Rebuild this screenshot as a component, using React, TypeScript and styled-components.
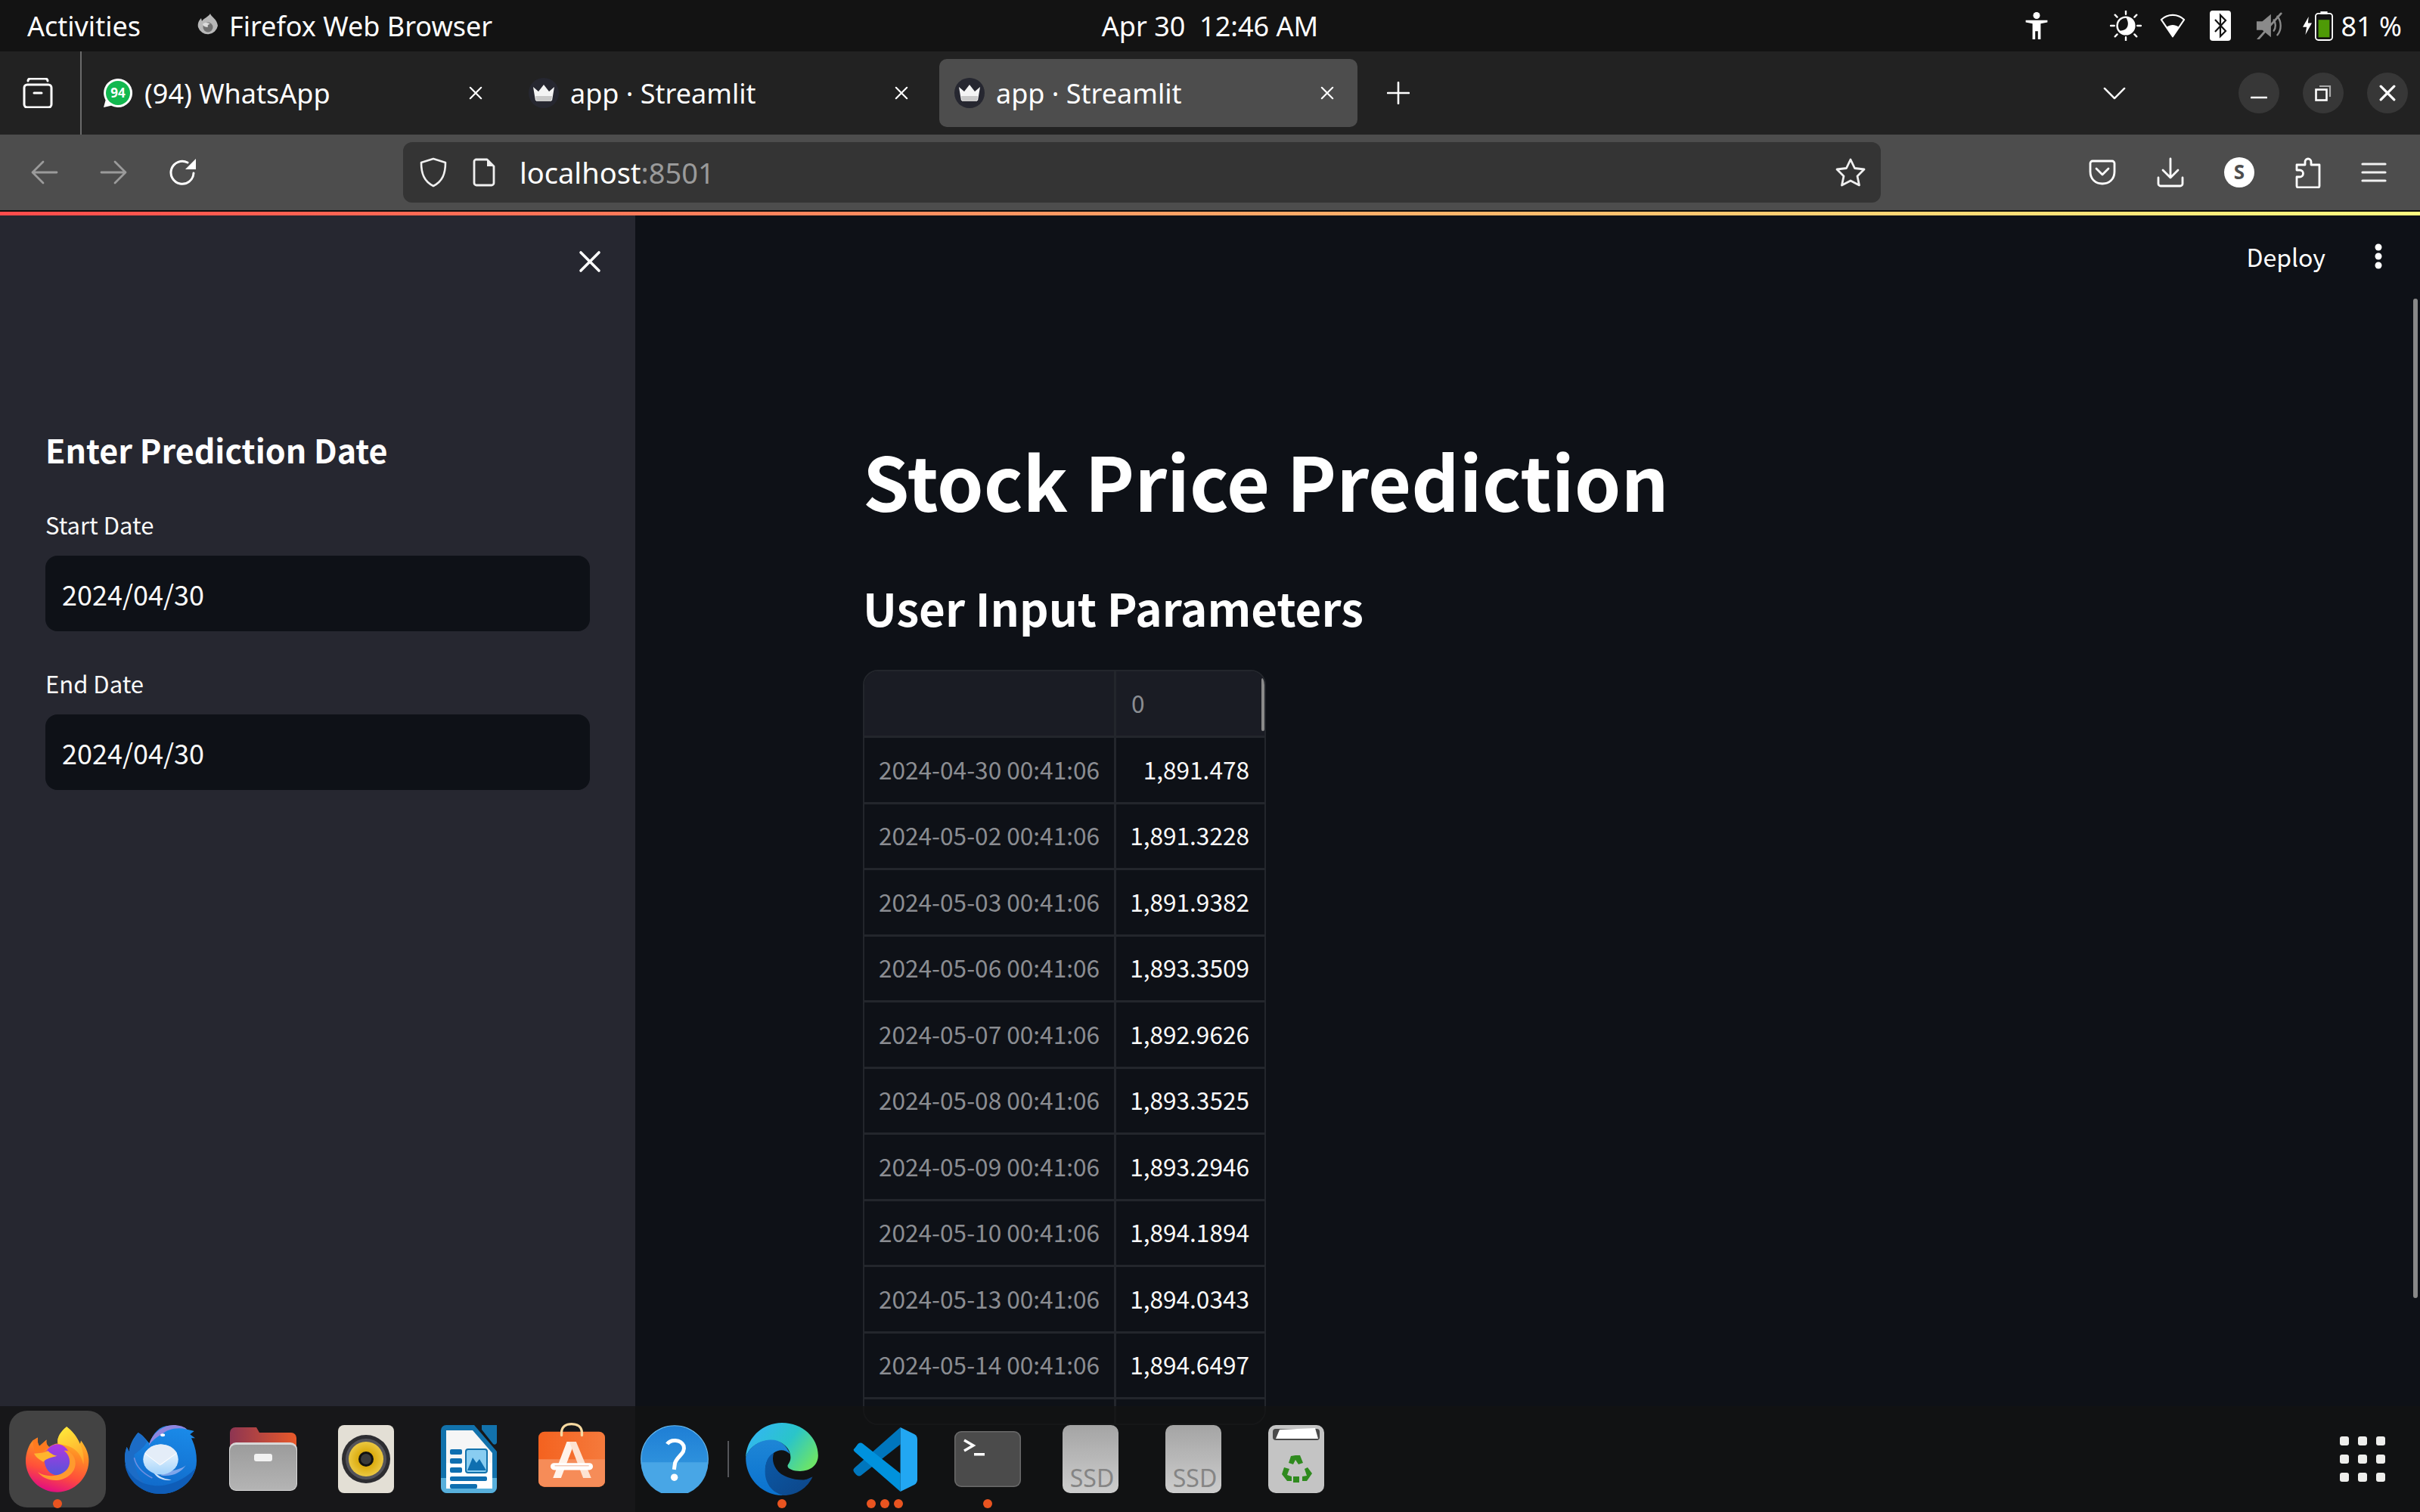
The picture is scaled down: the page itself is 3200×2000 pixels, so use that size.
import React from 'react';
import styled, { createGlobalStyle } from 'styled-components';

const GlobalStyle = createGlobalStyle`
  html, body {
    margin: 0;
    padding: 0;
    background: #0e1117;
  }
  * {
    box-sizing: border-box;
  }
`;

const systemFont = `'Noto Sans', 'Open Sans', sans-serif`;
const appFont = `'Noto Sans CJK JP', 'Noto Sans', sans-serif`;

const Screen = styled.div`
  position: relative;
  width: 3200px;
  height: 2000px;
  overflow: hidden;
  display: flex;
  flex-direction: column;
  background: #0e1117;
  color: #fff;
  font-family: ${systemFont};
`;

/* gnome top bar */
const TopBar = styled.div`
  height: 68px;
  flex: none;
  display: grid;
  grid-template-columns: 1fr auto 1fr;
  align-items: center;
  background: #131313;
  font-size: 36px;
  padding: 0 24px 0 36px;
`;

const TopLeft = styled.div`
  display: flex;
  align-items: center;
`;

const TopTitle = styled.span`
  margin-left: 13px;
`;

const Clock = styled.span`
  margin-right: 12px;
`;

const TopRight = styled.div`
  display: flex;
  align-items: center;
  justify-content: flex-end;
`;

const Tray = styled.span<{ $w: number; $gap?: number }>`
  display: flex;
  justify-content: center;
  width: ${(p) => p.$w}px;
  margin-left: ${(p) => p.$gap ?? 0}px;
`;

const Percent = styled.span`
  margin-left: 11px;
`;

/* browser tabs */
const TabBar = styled.div`
  height: 110px;
  flex: none;
  display: flex;
  align-items: center;
  background: #222222;
  font-size: 36px;
`;

const ViewButton = styled.div`
  width: 108px;
  height: 110px;
  flex: none;
  margin-right: 8px;
  display: flex;
  align-items: center;
  justify-content: center;
  padding-right: 6px;
  border-right: 2px solid #6a6a6a;
`;

const Tab = styled.div<{ $active?: boolean }>`
  width: 553px;
  height: 90px;
  flex: none;
  margin-right: 10px;
  padding: 0 31px 0 20px;
  display: flex;
  align-items: center;
  gap: 15px;
  border-radius: 10px;
  background: ${(p) => (p.$active ? '#4d4d4d' : 'transparent')};
`;

const TabLabel = styled.span`
  flex: 1;
  white-space: nowrap;
`;

const NewTab = styled.div`
  width: 44px;
  margin-left: 22px;
  display: flex;
  justify-content: center;
`;

const TabChevron = styled.div`
  margin-left: 907px;
  width: 36px;
  display: flex;
  justify-content: center;
`;

const WindowButtons = styled.div`
  margin-left: 146px;
  display: flex;
  gap: 31px;
`;

const WindowButton = styled.div`
  width: 54px;
  height: 54px;
  border-radius: 50%;
  background: #373737;
  display: flex;
  align-items: center;
  justify-content: center;
`;

/* nav toolbar */
const NavBar = styled.div`
  height: 100px;
  flex: none;
  display: flex;
  align-items: center;
  background: #4d4d4d;
`;

const NavLeft = styled.div`
  width: 533px;
  flex: none;
  display: flex;
  align-items: center;
  padding-left: 41px;
  gap: 55px;
`;

const UrlBar = styled.div`
  width: 1954px;
  height: 80px;
  flex: none;
  display: flex;
  align-items: center;
  padding: 0 20px 0 22px;
  border-radius: 12px;
  background: #343434;
  font-size: 38px;
`;

const PageIcon = styled.svg`
  margin-left: 34px;
`;

const UrlText = styled.span`
  margin-left: 32px;
  flex: 1;
`;

const UrlPort = styled.span`
  color: #9a9a9a;
`;

const NavRight = styled.div`
  flex: 1;
  display: flex;
  align-items: center;
  padding-left: 275px;
  gap: 53.5px;
`;

const ChromeEdge = styled.div`
  height: 2px;
  flex: none;
  background: #0c0c0c;
`;

const Decoration = styled.div`
  height: 5px;
  flex: none;
  background: linear-gradient(90deg, #ff4b4b, #fffd80);
`;

/* streamlit page */
const Page = styled.div`
  flex: 1;
  min-height: 0;
  display: flex;
  font-family: ${appFont};
`;

const Sidebar = styled.aside`
  width: 840px;
  flex: none;
  background: #262730;
  padding: 46px 60px 0;
`;

const CloseRow = styled.div`
  display: flex;
  justify-content: flex-end;
  height: 30px;
  margin-right: -15px;
`;

const SideHeading = styled.h3`
  margin: 201px 0 0;
  font-size: 43px;
  line-height: 64px;
  font-weight: 600;
`;

const FieldLabel = styled.div<{ $top: number }>`
  margin-top: ${(p) => p.$top}px;
  font-size: 31px;
  line-height: 44px;
  color: #fafafa;
`;

const DateInput = styled.div`
  margin-top: 19px;
  height: 100px;
  width: 720px;
  display: flex;
  align-items: center;
  padding-left: 22px;
  border-radius: 16px;
  background: #0e1117;
  font-size: 36px;
  color: #fafafa;
`;

const Main = styled.main`
  position: relative;
  flex: 1;
  min-width: 0;
  padding-left: 301px;
  overflow: hidden;
`;

const Header = styled.div`
  position: absolute;
  top: 34px;
  right: 49px;
  display: flex;
  align-items: center;
  gap: 64px;
  font-size: 32px;
  line-height: 40px;
`;

const PageScrollbar = styled.div`
  position: absolute;
  top: 110px;
  right: 3px;
  width: 6px;
  height: 1322px;
  border-radius: 3px;
  background: #888888;
`;

const Title = styled.h1`
  margin: 289px 0 0;
  font-size: 98.5px;
  line-height: 120px;
  font-weight: 700;
`;

const Subtitle = styled.h2`
  margin: 69px 0 0;
  font-size: 60px;
  line-height: 80px;
  font-weight: 600;
`;

const Frame = styled.div`
  position: relative;
  margin-top: 43px;
  width: 533px;
  height: 999px;
  overflow: hidden;
  border: 2px solid #23262c;
  border-radius: 20px;
  display: grid;
  grid-template-columns: 333px 196px;
  grid-template-rows: 88px;
  grid-auto-rows: 87.5px;
  font-size: 31.6px;
`;

const Cell = styled.div<{ $kind: 'corner' | 'head' | 'index' | 'value' }>`
  display: flex;
  align-items: center;
  white-space: nowrap;
  justify-content: ${(p) => (p.$kind === 'value' ? 'flex-end' : p.$kind === 'index' ? 'center' : 'flex-start')};
  padding: 0 ${(p) => (p.$kind === 'index' ? 0 : 20)}px 3px;
  border-bottom: 3px solid #23262c;
  border-right: ${(p) => (p.$kind === 'corner' || p.$kind === 'index' ? '3px solid #23262c' : '0')};
  background: ${(p) => (p.$kind === 'corner' || p.$kind === 'head' ? '#1a1c24' : '#0e1117')};
  color: ${(p) => (p.$kind === 'value' ? '#fafafa' : '#8b8d92')};
`;

const ColumnGrip = styled.div`
  position: absolute;
  top: 9px;
  right: 0;
  width: 4px;
  height: 70px;
  border-radius: 2px;
  background: #8a8a8a;
`;

/* dock */
const Dock = styled.nav`
  position: absolute;
  left: 0;
  right: 0;
  bottom: 0;
  height: 140px;
  display: flex;
  padding-left: 8px;
  background: rgba(18, 18, 18, 0.76);
`;

const DockSlot = styled.div<{ $active?: boolean }>`
  position: relative;
  width: 128px;
  height: 128px;
  margin: 6px 4px;
  flex: none;
  border-radius: 24px;
  display: flex;
  align-items: center;
  justify-content: center;
  background: ${(p) => (p.$active ? '#434343' : 'transparent')};
`;

const RunDots = styled.div`
  position: absolute;
  left: 0;
  right: 0;
  bottom: -1px;
  display: flex;
  justify-content: center;
  gap: 6px;
`;

const RunDot = styled.span`
  width: 12px;
  height: 12px;
  border-radius: 50%;
  background: #e95420;
`;

const DockDivider = styled.div`
  width: 2px;
  height: 48px;
  margin: 46px 2px 0 2px;
  flex: none;
  background: #55565a;
`;

const AppGrid = styled.div`
  position: absolute;
  right: 46px;
  top: 40px;
  display: grid;
  grid-template-columns: repeat(3, 12px);
  grid-auto-rows: 12px;
  gap: 12px;
`;

const AppGridDot = styled.span`
  border-radius: 3px;
  background: #eeeeec;
`;

const stroke = (color = '#fff', width = 3) => ({
  fill: 'none',
  stroke: color,
  strokeWidth: width,
  strokeLinecap: 'round' as const,
  strokeLinejoin: 'round' as const,
});

const Close = ({ size = 18, width = 2.4 }: { size?: number; width?: number }) => (
  <svg width={size} height={size} viewBox="0 0 20 20">
    <path d="M2 2 18 18M18 2 2 18" {...stroke('#fff', width)} />
  </svg>
);

const Crown = () => (
  <svg width="40" height="40" viewBox="0 0 40 40">
    <circle cx="20" cy="20" r="20" fill="#262730" />
    <path d="M6 12 13 18 20 9 27 18 34 12 31 30H9z" fill="#f4f4f4" />
    <path d="M9 24H31L30 31H10z" fill="#c9c9c9" />
  </svg>
);

const WhatsAppIcon = () => (
  <svg width="40" height="40" viewBox="0 0 40 40">
    <path d="M20 1a19 19 0 1 1-9 35.7L1 39l2.6-9.6A19 19 0 0 1 20 1z" fill="#fff" />
    <circle cx="20" cy="20" r="16" fill="#12b84f" />
    <text x="20" y="26" textAnchor="middle" fontSize="17" fontWeight="700" fontFamily="'Noto Sans', sans-serif" fill="#fff">94</text>
  </svg>
);

const FirefoxSmall = () => (
  <svg width="30" height="32" viewBox="0 0 30 32">
    <path d="M18 0c1 4 9 7 10 16A13.5 14 0 0 1 2 18C1 13 3 9 6 6l1 4c2-4 8-5 11-10z" fill="#b8b8b8" />
    <circle cx="15" cy="18" r="6.5" fill="#707070" />
    <path d="M8 14c3-3 8-2 10 0-3 0-4 2-3 4-3 0-6-1-7-4z" fill="#dcdcdc" />
  </svg>
);

const Firefox = () => (
  <svg width="84" height="87" viewBox="42 45 253 260">
    <defs>
      <linearGradient id="ffBody" x1="0.75" y1="0" x2="0.45" y2="1">
        <stop offset="0" stopColor="#ffd92e" />
        <stop offset="0.4" stopColor="#ff8a25" />
        <stop offset="0.72" stopColor="#ff4f3a" />
        <stop offset="1" stopColor="#e3107f" />
      </linearGradient>
      <linearGradient id="ffFlame" x1="0.3" y1="0" x2="0.7" y2="1">
        <stop offset="0" stopColor="#ffe83a" />
        <stop offset="1" stopColor="#ffa52c" />
      </linearGradient>
      <linearGradient id="ffGlobe" x1="0.5" y1="0" x2="0.5" y2="1">
        <stop offset="0" stopColor="#b136e3" />
        <stop offset="1" stopColor="#5555d8" />
      </linearGradient>
    </defs>
    <path
      d="M205 45C225 60 245 80 258 115L262 100C285 130 295 160 293 185 290 250 235 305 168 305 100 305 42 250 42 180 42 150 55 115 70 100L90 88C88 105 92 115 96 122L125 97C122 110 128 120 135 125 150 115 165 110 170 112 165 90 180 65 205 45Z"
      fill="url(#ffBody)"
    />
    <path d="M205 45C250 80 280 140 272 195 265 160 245 135 220 125 200 118 180 115 170 112 165 90 180 65 205 45Z" fill="url(#ffFlame)" />
    <ellipse cx="168" cy="176" rx="52" ry="62" fill="url(#ffGlobe)" />
    <path d="M195 140C215 135 240 160 240 190 240 230 200 258 160 258 130 258 105 245 90 225 115 245 185 250 210 210 225 185 215 155 195 140Z" fill="#ff9a2e" />
    <path d="M75 152C95 148 118 150 130 140 140 150 155 160 167 160 150 168 125 168 112 185 100 178 85 170 75 152Z" fill="#ffb52e" />
    <path d="M70 100L90 88C88 105 92 115 96 122L125 97C122 110 128 120 135 125 120 135 110 145 80 148 75 130 70 115 70 100Z" fill="#ff7a1f" />
  </svg>
);

const Thunderbird = () => (
  <svg width="95" height="91" viewBox="432 48 286 274">
    <defs>
      <linearGradient id="tbBody" x1="0.6" y1="0" x2="0.4" y2="1">
        <stop offset="0" stopColor="#1a8ae8" />
        <stop offset="1" stopColor="#1068c8" />
      </linearGradient>
      <linearGradient id="tbMail" x1="0.5" y1="0" x2="0.5" y2="1">
        <stop offset="0" stopColor="#ffffff" />
        <stop offset="1" stopColor="#a4d3fa" />
      </linearGradient>
    </defs>
    <path
      d="M530 120C545 80 570 50 610 50 640 50 665 55 680 65L708 72 692 85 712 100 697 100C712 130 718 160 718 190 718 265 650 322 575 322 495 322 432 260 432 175 432 160 436 145 440 135L450 155C450 130 465 100 485 78 510 95 520 110 530 120Z"
      fill="url(#tbBody)"
    />
    <path d="M485 78C470 100 450 130 450 155L440 135C432 160 432 175 432 180 435 240 480 290 530 300 495 270 465 230 470 165 490 150 515 130 520 115 510 95 500 85 485 78Z" fill="#1c6cc6" />
    <path d="M432 200C460 280 540 300 600 285 650 275 700 240 715 215 700 280 640 322 575 322 500 322 440 270 432 200Z" fill="#0f5db8" />
    <path d="M528 130C535 90 575 50 625 48 650 48 670 55 680 65 640 55 600 65 580 85 560 95 540 110 528 130Z" fill="#8f86df" />
    <ellipse cx="583" cy="88" rx="9" ry="6" fill="#fff" />
    <path d="M470 180C478 215 505 240 540 258" {...stroke('#6f8fe0', 5)} />
    <path d="M575 248C620 255 655 238 675 208 660 222 620 232 590 232z" fill="#7ea5ea" />
    <path d="M555 240C575 258 595 264 618 266 590 272 560 262 545 235z" fill="#cfe3fa" />
    <ellipse cx="575" cy="185" rx="70" ry="60" fill="url(#tbMail)" />
    <path d="M512 160C530 135 555 125 575 125 600 125 625 135 640 160L580 205Q575 208 570 205Z" fill="#e4edf8" />
    <path d="M512 160 572 207 638 160" fill="none" stroke="#ffffff" strokeWidth="3" />
  </svg>
);

const Files = () => (
  <svg width="90" height="84" viewBox="0 0 90 84">
    <defs>
      <linearGradient id="fileTab" x1="0" y1="0" x2="1" y2="0">
        <stop offset="0" stopColor="#8d3552" />
        <stop offset="1" stopColor="#e8592a" />
      </linearGradient>
      <linearGradient id="fileBody" x1="0" y1="0" x2="0" y2="1">
        <stop offset="0" stopColor="#9c9c9c" />
        <stop offset="1" stopColor="#b4b4b4" />
      </linearGradient>
    </defs>
    <path d="M8 0H36l4 7h42a7 7 0 0 1 7 7v18H1V7a7 7 0 0 1 7-7z" fill="url(#fileTab)" />
    <rect x="0" y="20" width="90" height="64" rx="9" fill="#d8d8d8" />
    <rect x="1" y="23" width="88" height="60" rx="8" fill="url(#fileBody)" />
    <rect x="33" y="35" width="24" height="10" rx="3" fill="#f2f2f2" />
  </svg>
);

const Rhythmbox = () => (
  <svg width="74" height="90" viewBox="0 0 74 90">
    <defs>
      <radialGradient id="rbCone" cx="0.5" cy="0.5" r="0.6">
        <stop offset="0.3" stopColor="#d9a808" />
        <stop offset="1" stopColor="#f1d253" />
      </radialGradient>
    </defs>
    <rect width="74" height="90" rx="8" fill="#e3dfd5" />
    <circle cx="37" cy="45" r="32" fill="#2d2d31" />
    <circle cx="37" cy="45" r="27" fill="#54545a" />
    <circle cx="37" cy="45" r="23" fill="url(#rbCone)" />
    <circle cx="37" cy="45" r="10" fill="#111" />
    <circle cx="37" cy="45" r="7" fill="#3a3a3a" />
  </svg>
);

const Writer = () => (
  <svg width="74" height="90" viewBox="0 0 74 90">
    <path d="M7 0H44L74 35V82a8 8 0 0 1-8 8H8a8 8 0 0 1-8-8V7a7 7 0 0 1 7-7z" fill="#1272ac" />
    <path d="M0 70H74V82a8 8 0 0 1-8 8H8a8 8 0 0 1-8-8z" fill="#58b0dc" />
    <path d="M7 7H42L68 37V84H7z" fill="#f6f6f6" />
    <path d="M7 50H68V84H7z" fill="#fff" />
    <path d="M54 0H74V23a3 3 0 0 1-5 2L54 6z" fill="#1272ac" />
    <rect x="12" y="32" width="16" height="7" rx="2" fill="#0f6fb0" />
    <rect x="12" y="44" width="16" height="7" rx="2" fill="#0f6fb0" />
    <rect x="12" y="56" width="16" height="7" rx="2" fill="#0f6fb0" />
    <rect x="33" y="32" width="28" height="31" rx="3" fill="#89cdf1" stroke="#1272ac" strokeWidth="2" />
    <path d="M35 60 42 43 47 50 51 45 60 60z" fill="#0f6fb0" />
    <rect x="12" y="68" width="49" height="6" rx="2" fill="#0f6fb0" />
    <rect x="12" y="78" width="36" height="6" rx="2" fill="#0f6fb0" />
  </svg>
);

const Store = () => (
  <svg width="88" height="97" viewBox="35 20 265 292">
    <defs>
      <linearGradient id="storeTop" x1="0" y1="0" x2="1" y2="0">
        <stop offset="0" stopColor="#f4621f" />
        <stop offset="1" stopColor="#f57a3c" />
      </linearGradient>
    </defs>
    <rect x="35" y="55" width="265" height="220" rx="24" fill="url(#storeTop)" />
    <path d="M35 165H300V251a24 24 0 0 1-24 24H59a24 24 0 0 1-24-24z" fill="#f68c58" />
    <path d="M127 70V60C127 35 145 25 167 25S208 35 208 60V70" {...stroke('#f7d9a0', 10)} />
    <path d="M148 95H180L125 240H93z" fill="#fff3ea" />
    <path d="M158 95H185L245 240H213z" fill="#fde3d2" />
    <rect x="83" y="180" width="169" height="28" rx="14" fill="#fff" />
    <rect x="100" y="189" width="136" height="4" fill="#f2c4ae" />
  </svg>
);

const Help = () => (
  <svg width="90" height="90" viewBox="442 30 268 268">
    <defs>
      <linearGradient id="helpTop" x1="0" y1="0" x2="0" y2="1">
        <stop offset="0" stopColor="#1e7ed5" />
        <stop offset="1" stopColor="#3aa0e2" />
      </linearGradient>
    </defs>
    <circle cx="576" cy="164" r="132" fill="url(#helpTop)" stroke="#68b9ee" strokeWidth="3" />
    <path d="M444 177H708A132 132 0 0 1 444 177z" fill="#48a6e6" />
    <path d="M547 105C560 85 600 85 612 112 620 140 590 150 578 178L574 205" {...stroke('#fff', 15)} strokeLinecap="butt" />
    <circle cx="575" cy="236" r="14" fill="#fff" />
  </svg>
);

const Edge = () => (
  <svg width="96" height="96" viewBox="33 20 289 290">
    <defs>
      <linearGradient id="edgeTop" x1="0" y1="0.2" x2="1" y2="0.7">
        <stop offset="0" stopColor="#33b5f5" />
        <stop offset="0.55" stopColor="#2ac5c9" />
        <stop offset="1" stopColor="#6ce468" />
      </linearGradient>
      <linearGradient id="edgeLeft" x1="0.5" y1="0" x2="0.5" y2="1">
        <stop offset="0" stopColor="#1e86d6" />
        <stop offset="1" stopColor="#0a72cf" />
      </linearGradient>
      <linearGradient id="edgeDark" x1="0" y1="0" x2="1" y2="1">
        <stop offset="0" stopColor="#0b5aa8" />
        <stop offset="1" stopColor="#0d4587" />
      </linearGradient>
    </defs>
    <path d="M33 160C35 80 100 20 178 20 260 20 322 80 322 150 322 190 290 213 250 213 225 213 200 205 200 192 200 185 212 178 212 158 212 115 170 90 135 90 90 90 45 115 33 160Z" fill="url(#edgeTop)" />
    <path d="M33 160C45 115 90 88 135 88 170 88 195 110 210 145 190 125 165 125 145 140 115 160 105 200 115 240 125 280 155 300 185 310 100 312 33 245 33 160Z" fill="url(#edgeLeft)" />
    <path d="M185 310C140 300 110 265 110 215 110 175 125 150 145 140 138 160 140 185 155 205 175 235 220 248 260 248 275 248 290 240 300 235 280 280 235 310 185 310Z" fill="url(#edgeDark)" />
  </svg>
);

const VSCode = () => (
  <svg width="85" height="85" viewBox="458 38 254 254">
    <path d="M645 38V105L490 228Q480 235 470 225L462 215Q455 205 465 197Z" fill="#0076bd" />
    <path d="M465 120 478 103Q488 95 497 103L645 220V292L465 135Q455 127 465 120Z" fill="#0092dd" />
    <path d="M645 38 700 65Q712 72 712 85V245Q712 258 700 265L645 292Z" fill="#22a7f2" />
  </svg>
);

const Terminal = () => (
  <svg width="88" height="74" viewBox="0 0 88 74">
    <rect width="88" height="74" rx="9" fill="#6a6a6a" />
    <rect x="1.5" y="1.5" width="85" height="71" rx="8" fill="#4b4b4b" />
    <path d="M13 12 25 19 13 26" fill="none" stroke="#fff" strokeWidth="3.5" />
    <rect x="26" y="29" width="14" height="3.5" fill="#fff" />
  </svg>
);

const Drive = () => (
  <svg width="74" height="90" viewBox="0 0 74 90">
    <defs>
      <linearGradient id="driveBody" x1="0" y1="0" x2="0" y2="1">
        <stop offset="0" stopColor="#a4a4a4" />
        <stop offset="1" stopColor="#cdcdcd" />
      </linearGradient>
    </defs>
    <rect width="74" height="90" rx="10" fill="url(#driveBody)" />
    <text x="39" y="82" textAnchor="middle" fontSize="32" fontFamily="'Noto Sans', sans-serif" fill="#858585">SSD</text>
  </svg>
);

const Trash = () => (
  <svg width="74" height="90" viewBox="0 0 74 90">
    <rect width="74" height="90" rx="10" fill="#c4c4c4" />
    <rect x="6" y="5" width="62" height="15" rx="4" fill="#4a4a4a" />
    <path d="M10 18 15 6 62 4 66 18z" fill="#fff" />
    <path d="M30 41 36 40 42 40 46 50 40 52 36 46 33 52 27 50zM21 56l7 2-3 8 6 2v6h-6l-7-9zM52 56l6 8-7 10h-6v-6l6-1-3-9zM33 68h8v8h-8z" fill="#2f8a1e" />
  </svg>
);

const rows = [
  ['2024-04-30 00:41:06', '1,891.478'],
  ['2024-05-02 00:41:06', '1,891.3228'],
  ['2024-05-03 00:41:06', '1,891.9382'],
  ['2024-05-06 00:41:06', '1,893.3509'],
  ['2024-05-07 00:41:06', '1,892.9626'],
  ['2024-05-08 00:41:06', '1,893.3525'],
  ['2024-05-09 00:41:06', '1,893.2946'],
  ['2024-05-10 00:41:06', '1,894.1894'],
  ['2024-05-13 00:41:06', '1,894.0343'],
  ['2024-05-14 00:41:06', '1,894.6497'],
  ['', ''],
];

const dockApps = [
  { key: 'firefox', icon: <Firefox />, dots: 1, active: true },
  { key: 'thunderbird', icon: <Thunderbird />, dots: 0 },
  { key: 'files', icon: <Files />, dots: 0 },
  { key: 'rhythmbox', icon: <Rhythmbox />, dots: 0 },
  { key: 'writer', icon: <Writer />, dots: 0 },
  { key: 'store', icon: <Store />, dots: 0 },
  { key: 'help', icon: <Help />, dots: 0 },
  { key: 'divider', icon: null, dots: 0 },
  { key: 'edge', icon: <Edge />, dots: 1 },
  { key: 'vscode', icon: <VSCode />, dots: 3 },
  { key: 'terminal', icon: <Terminal />, dots: 1 },
  { key: 'ssd1', icon: <Drive />, dots: 0 },
  { key: 'ssd2', icon: <Drive />, dots: 0 },
  { key: 'trash', icon: <Trash />, dots: 0 },
];

const App = () => {
  return (
    <Screen>
      <GlobalStyle />
      <TopBar>
        <TopLeft>
          <span>Activities</span>
          <Tray $w={30} $gap={74}>
            <FirefoxSmall />
          </Tray>
          <TopTitle>Firefox Web Browser</TopTitle>
        </TopLeft>
        <Clock>Apr 30&nbsp;&nbsp;12:46 AM</Clock>
        <TopRight>
          <Tray $w={30}>
            <svg width="30" height="36" viewBox="0 0 32 40">
              <circle cx="16" cy="5" r="5" fill="#fff" />
              <path d="M0 12H32V15L22 17V40H18V28H14V40H10V17L0 15z" fill="#fff" />
            </svg>
          </Tray>
          <Tray $w={42} $gap={82}>
            <svg width="42" height="40" viewBox="0 0 42 42">
              <path d="M21 0V5M21 37V42M0 21H5M37 21H42M6 6 9 9M33 33 36 36M36 6 33 9M9 33 6 36" {...stroke('#fff', 2.5)} />
              <circle cx="21" cy="21" r="12" fill="none" stroke="#fff" strokeWidth="2.5" />
              <path d="M21 9a12 12 0 0 1 0 24c-7 0-9-5-9-5 8 0 12-4 12-10 0-4-3-9-3-9z" fill="#fff" />
            </svg>
          </Tray>
          <Tray $w={38} $gap={22}>
            <svg width="38" height="32" viewBox="0 0 38 36">
              <path d="M19 34 2 9C7 4 13 2 19 2s12 2 17 7z" fill="none" stroke="#fff" strokeWidth="2.5" strokeLinejoin="round" />
              <path d="M19 34 10 20c3-2 6-3 9-3s6 1 9 3z" fill="#fff" />
            </svg>
          </Tray>
          <Tray $w={28} $gap={30}>
            <svg width="28" height="40" viewBox="0 0 28 40">
              <rect width="28" height="40" rx="4" fill="#fff" />
              <path d="M7 12 21 27 14 34V6L21 13 7 28" fill="none" stroke="#131313" strokeWidth="2.2" />
            </svg>
          </Tray>
          <Tray $w={36} $gap={33}>
            <svg width="36" height="36" viewBox="0 0 36 38">
              <path d="M0 13H8L20 3V35L8 25H0z" fill="#8a8a8a" />
              <path d="M24 11c3 4 3 11 0 15M29 6c6 7 6 19 0 26" {...stroke('#8a8a8a', 2.5)} />
              <path d="M2 38 34 2" {...stroke('#8a8a8a', 3)} />
            </svg>
          </Tray>
          <Tray $w={12} $gap={26}>
            <svg width="12" height="26" viewBox="0 0 14 28">
              <path d="M9 0 0 16H6L4 28 14 10H8z" fill="#fff" />
            </svg>
          </Tray>
          <Tray $w={24} $gap={4}>
            <svg width="24" height="39" viewBox="0 0 26 42">
              <rect x="8" y="0" width="10" height="4" fill="#fff" />
              <rect x="1" y="3" width="24" height="38" rx="4" fill="none" stroke="#fff" strokeWidth="2" />
              <rect x="5" y="12" width="16" height="25" fill="#4e9a06" />
            </svg>
          </Tray>
          <Percent>81 %</Percent>
        </TopRight>
      </TopBar>

      <TabBar>
        <ViewButton>
          <svg width="40" height="40" viewBox="0 0 40 40">
            <path d="M7 4a3 3 0 0 1 3-3H30a3 3 0 0 1 3 3" {...stroke('#fff', 3)} />
            <rect x="2" y="9" width="36" height="30" rx="4" {...stroke('#fff', 3)} />
            <path d="M15 20H25" {...stroke('#fff', 3)} />
          </svg>
        </ViewButton>
        <Tab>
          <WhatsAppIcon />
          <TabLabel>(94) WhatsApp</TabLabel>
          <Close />
        </Tab>
        <Tab>
          <Crown />
          <TabLabel>app · Streamlit</TabLabel>
          <Close />
        </Tab>
        <Tab $active>
          <Crown />
          <TabLabel>app · Streamlit</TabLabel>
          <Close />
        </Tab>
        <NewTab>
          <svg width="30" height="30" viewBox="0 0 30 30">
            <path d="M15 1V29M1 15H29" {...stroke('#fff', 2.6)} />
          </svg>
        </NewTab>
        <TabChevron>
          <svg width="30" height="17" viewBox="0 0 32 18">
            <path d="M2 2 16 16 30 2" {...stroke('#fff', 2.6)} />
          </svg>
        </TabChevron>
        <WindowButtons>
          <WindowButton>
            <svg width="22" height="22" viewBox="0 0 22 22">
              <path d="M1 17H21" {...stroke('#fff', 2.6)} />
            </svg>
          </WindowButton>
          <WindowButton>
            <svg width="22" height="22" viewBox="0 0 22 22">
              <rect x="1.5" y="6.5" width="14" height="14" fill="none" stroke="#fff" strokeWidth="2.6" />
              <path d="M6 2H20V16" fill="none" stroke="#aaa" strokeWidth="2.2" />
            </svg>
          </WindowButton>
          <WindowButton>
            <Close size={22} width={3} />
          </WindowButton>
        </WindowButtons>
      </TabBar>

      <NavBar>
        <NavLeft>
          <svg width="36" height="32" viewBox="0 0 36 32">
            <path d="M34 16H2M16 2 2 16 16 30" {...stroke('#9b9b9b', 2.8)} />
          </svg>
          <svg width="36" height="32" viewBox="0 0 36 32">
            <path d="M2 16H34M20 2 34 16 20 30" {...stroke('#9b9b9b', 2.8)} />
          </svg>
          <svg width="38" height="38" viewBox="0 0 38 38">
            <path d="M33 20A15 15 0 1 1 25 6" {...stroke('#fff', 3)} />
            <path d="M36 1V15H22z" fill="#fff" />
          </svg>
        </NavLeft>
        <UrlBar>
          <svg width="36" height="40" viewBox="0 0 36 40">
            <path d="M18 2 34 7C34 22 30 32 18 38 6 32 2 22 2 7z" {...stroke('#f0f0f0', 2.6)} />
          </svg>
          <PageIcon width="30" height="38" viewBox="0 0 30 38">
            <path d="M4 2H19L28 11V33a3 3 0 0 1-3 3H5a3 3 0 0 1-3-3V5a3 3 0 0 1 2-3z" {...stroke('#f0f0f0', 2.8)} />
            <path d="M19 2V11H28z" fill="#f0f0f0" />
          </PageIcon>
          <UrlText>
            localhost<UrlPort>:8501</UrlPort>
          </UrlText>
          <svg width="40" height="38" viewBox="0 0 40 38">
            <path d="M20 2 25.5 13.5 38 15 29 24 31.5 36 20 30 8.5 36 11 24 2 15 14.5 13.5z" {...stroke('#f0f0f0', 2.8)} />
          </svg>
        </UrlBar>
        <NavRight>
          <svg width="36" height="34" viewBox="0 0 36 34">
            <path d="M2 5a3 3 0 0 1 3-3H31a3 3 0 0 1 3 3V16C34 26 27 32 18 32S2 26 2 16z" {...stroke('#fff', 2.8)} />
            <path d="M10 12 18 20 26 12" {...stroke('#fff', 2.8)} />
          </svg>
          <svg width="36" height="40" viewBox="0 0 36 40">
            <path d="M18 2V26M8 17 18 27 28 17M2 27V35a3 3 0 0 0 3 3H31a3 3 0 0 0 3-3V27" {...stroke('#fff', 2.8)} />
          </svg>
          <svg width="40" height="40" viewBox="0 0 40 40">
            <circle cx="20" cy="20" r="20" fill="#fff" />
            <text x="20" y="29" textAnchor="middle" fontSize="26" fontWeight="700" fontFamily="'Noto Sans', sans-serif" fill="#4d4d4d">S</text>
          </svg>
          <svg width="34" height="42" viewBox="0 0 34 42">
            <path d="M2 39V27H6a4 4 0 0 0 0-9H2V11H13V7a4 4 0 0 1 8 0v4h11v28a2 2 0 0 1-2 2H4a2 2 0 0 1-2-2z" {...stroke('#fff', 2.8)} />
          </svg>
          <svg width="34" height="26" viewBox="0 0 34 26">
            <path d="M2 2H32M2 13H32M2 24H32" {...stroke('#f0f0f0', 3.2)} />
          </svg>
        </NavRight>
      </NavBar>
      <ChromeEdge />
      <Decoration />

      <Page>
        <Sidebar>
          <CloseRow>
            <Close size={30} width={2.4} />
          </CloseRow>
          <SideHeading>Enter Prediction Date</SideHeading>
          <FieldLabel $top={46}>Start Date</FieldLabel>
          <DateInput>2024/04/30</DateInput>
          <FieldLabel $top={47}>End Date</FieldLabel>
          <DateInput>2024/04/30</DateInput>
        </Sidebar>
        <Main>
          <Header>
            <span>Deploy</span>
            <svg width="12" height="36" viewBox="0 0 12 36">
              <circle cx="6" cy="6" r="4.5" fill="#fff" />
              <circle cx="6" cy="18" r="4.5" fill="#fff" />
              <circle cx="6" cy="30" r="4.5" fill="#fff" />
            </svg>
          </Header>
          <PageScrollbar />
          <Title>Stock Price Prediction</Title>
          <Subtitle>User Input Parameters</Subtitle>
          <Frame>
            <Cell $kind="corner" />
            <Cell $kind="head">0</Cell>
            {rows.map((row, idx) => (
              <React.Fragment key={idx}>
                <Cell $kind="index">{row[0]}</Cell>
                <Cell $kind="value">{row[1]}</Cell>
              </React.Fragment>
            ))}
            <ColumnGrip />
          </Frame>
        </Main>
      </Page>

      <Dock>
        {dockApps.map((app) =>
          app.key === 'divider' ? (
            <DockDivider key={app.key} />
          ) : (
            <DockSlot key={app.key} $active={app.active}>
              {app.icon}
              {app.dots > 0 && (
                <RunDots>
                  {Array.from({ length: app.dots }).map((_, idx) => (
                    <RunDot key={idx} />
                  ))}
                </RunDots>
              )}
            </DockSlot>
          ),
        )}
        <AppGrid>
          {Array.from({ length: 9 }).map((_, idx) => (
            <AppGridDot key={idx} />
          ))}
        </AppGrid>
      </Dock>
    </Screen>
  );
};

export default App;
